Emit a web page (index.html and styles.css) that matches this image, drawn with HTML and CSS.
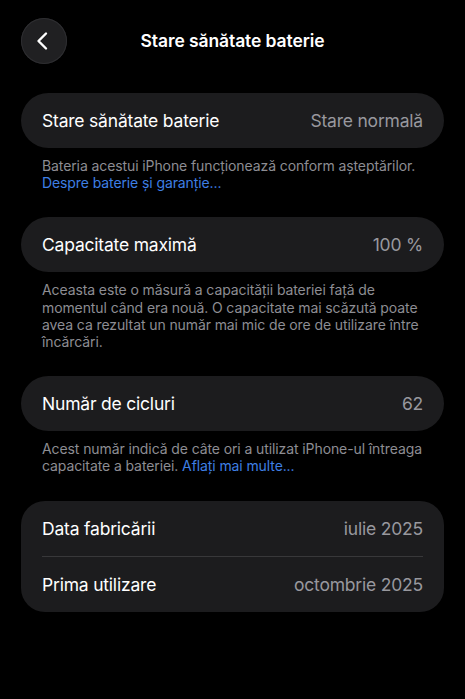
FILE: index.html
```html
<html>
<head>
<title>Stare sănătate baterie</title>
<meta charset="utf-8">
<link rel="stylesheet" href="styles.css">
</head>
<body>

<div class="header">
	<div class="back">
		<svg width="22" height="22" viewBox="0 0 22 22"><path d="M14 3.5 L6.5 11 L14 18.5" fill="none" stroke="#fff" stroke-width="2.4" stroke-linecap="round" stroke-linejoin="round"/></svg>
	</div>
	<div class="title">Stare sănătate baterie</div>
</div>

<div class="card">
	<div class="row"><span class="label">Stare sănătate baterie</span><span class="value">Stare normală</span></div>
</div>
<p class="note">Bateria acestui iPhone funcționează conform așteptărilor.<br><a href="#">Despre baterie și garanție...</a></p>

<div class="card">
	<div class="row"><span class="label">Capacitate maximă</span><span class="value">100 %</span></div>
</div>
<p class="note">Aceasta este o măsură a capacității bateriei față de momentul când era nouă. O capacitate mai scăzută poate avea ca rezultat un număr mai mic de ore de utilizare între încărcări.</p>

<div class="card">
	<div class="row"><span class="label">Număr de cicluri</span><span class="value">62</span></div>
</div>
<p class="note">Acest număr indică de câte ori a utilizat iPhone-ul întreaga capacitate a bateriei. <a href="#">Aflați mai multe...</a></p>

<div class="card group">
	<div class="row"><span class="label">Data fabricării</span><span class="value">iulie 2025</span></div>
	<div class="row"><span class="label">Prima utilizare</span><span class="value">octombrie 2025</span></div>
</div>

</body>
</html>
```

FILE: styles.css
```css
body {
	margin: 0;
	padding: 0 21px;
	background-color: #000;
	color: #fff;
	font-family: Inter, "Liberation Sans", sans-serif;
}

.header {
	position: relative;
	height: 93px;
}

.back {
	position: absolute;
	left: 0;
	top: 18px;
	width: 46px;
	height: 46px;
	border-radius: 50%;
	background-color: #202022;
	box-shadow: inset 0 0 0 1px #2e2e31;
	display: flex;
	align-items: center;
	justify-content: center;
}

.back svg {
	margin-left: -2px;
}

.title {
	text-align: center;
	padding-top: 30px;
	font-size: 17.5px;
	font-weight: 600;
	letter-spacing: -0.1px;
}

.card {
	background-color: #1c1c1e;
	border-radius: 28px;
	padding: 0 21px;
}

.card.group {
	border-radius: 24px;
}

.row {
	display: flex;
	justify-content: space-between;
	align-items: center;
	height: 55px;
	font-size: 17.5px;
	letter-spacing: -0.2px;
}

.label {
	font-weight: 400;
}

.group .row + .row {
	border-top: 1px solid #38383a;
}

.value {
	color: #98989e;
}

.note {
	margin: 9px 0 26px 0;
	padding: 0 21px;
	font-size: 14px;
	line-height: 17.2px;
	color: #8d8d93;
	letter-spacing: -0.1px;
}

.note a {
	color: #3e7fe4;
	text-decoration: none;
}
```
